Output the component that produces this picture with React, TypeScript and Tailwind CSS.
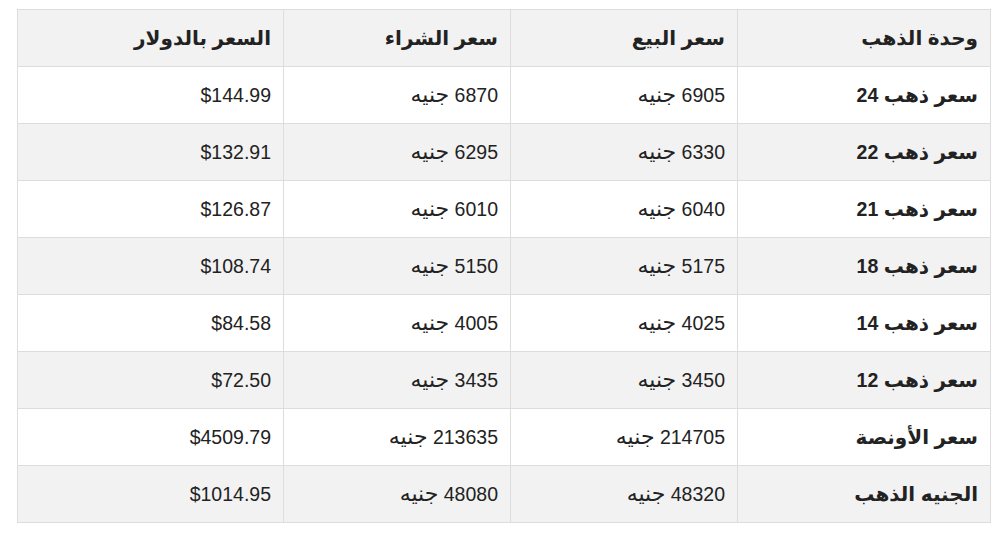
import React from "react";

const rows: [string, string, string, string][] = [
  ["سعر ذهب 24", "6905 جنيه", "6870 جنيه", "$144.99"],
  ["سعر ذهب 22", "6330 جنيه", "6295 جنيه", "$132.91"],
  ["سعر ذهب 21", "6040 جنيه", "6010 جنيه", "$126.87"],
  ["سعر ذهب 18", "5175 جنيه", "5150 جنيه", "$108.74"],
  ["سعر ذهب 14", "4025 جنيه", "4005 جنيه", "$84.58"],
  ["سعر ذهب 12", "3450 جنيه", "3435 جنيه", "$72.50"],
  ["سعر الأونصة", "214705 جنيه", "213635 جنيه", "$4509.79"],
  ["الجنيه الذهب", "48320 جنيه", "48080 جنيه", "$1014.95"],
];

function Mixed({ text, bold }: { text: string; bold?: boolean }) {
  const parts = text.split(/(\s*[0-9$.]+\s*)/).filter((p) => p.length > 0);
  return (
    <>
      {parts.map((p, i) =>
        /[0-9$]/.test(p) ? (
          <span key={i}>{p}</span>
        ) : (
          <span key={i} className={bold ? "text-[20px]" : "text-[22px]"}>
            {p}
          </span>
        )
      )}
    </>
  );
}

export default function App() {
  return (
    <div
      className="w-[1001px] h-[539px] bg-white pt-[9px] pl-[17px]"
      style={{ fontFamily: '"Liberation Sans", "DejaVu Sans", Arial, sans-serif' }}
    >
      <table dir="rtl" className="w-[973px] border-collapse table-fixed text-[19.5px] leading-[24px] text-[#222]">
        <colgroup>
          <col className="w-[253px]" />
          <col className="w-[227px]" />
          <col className="w-[227px]" />
          <col className="w-[266px]" />
        </colgroup>
        <thead>
          <tr className="h-[57px] bg-[#f2f2f2]">
            {["وحدة الذهب", "سعر البيع", "سعر الشراء", "السعر بالدولار"].map((h) => (
              <th key={h} className="border border-[#ddd] px-[12px] text-right font-bold">
                <Mixed text={h} bold />
              </th>
            ))}
          </tr>
        </thead>
        <tbody>
          {rows.map((r, i) => (
            <tr key={i} className={`h-[57px] ${i % 2 === 1 ? "bg-[#f2f2f2]" : "bg-white"}`}>
              <td className="border border-[#ddd] px-[12px] text-right font-bold">
                <Mixed text={r[0]} bold />
              </td>
              <td className="border border-[#ddd] px-[12px] text-right">
                <Mixed text={r[1]} />
              </td>
              <td className="border border-[#ddd] px-[12px] text-right">
                <Mixed text={r[2]} />
              </td>
              <td className="border border-[#ddd] px-[12px] text-right">
                <Mixed text={r[3]} />
              </td>
            </tr>
          ))}
        </tbody>
      </table>
    </div>
  );
}
